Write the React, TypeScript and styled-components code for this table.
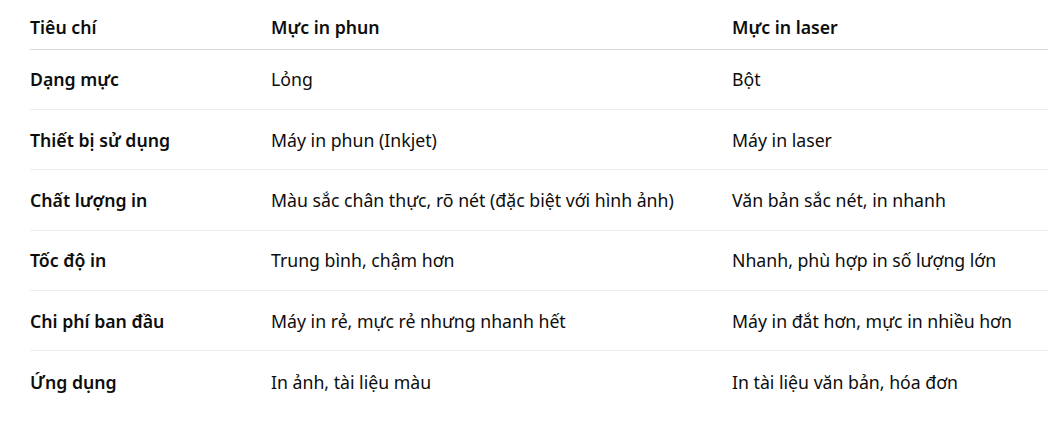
import React from 'react';
import styled, { createGlobalStyle } from 'styled-components';

const rows: [string, string, string][] = [
  ['Dạng mực', 'Lỏng', 'Bột'],
  ['Thiết bị sử dụng', 'Máy in phun (Inkjet)', 'Máy in laser'],
  ['Chất lượng in', 'Màu sắc chân thực, rõ nét (đặc biệt với hình ảnh)', 'Văn bản sắc nét, in nhanh'],
  ['Tốc độ in', 'Trung bình, chậm hơn', 'Nhanh, phù hợp in số lượng lớn'],
  ['Chi phí ban đầu', 'Máy in rẻ, mực rẻ nhưng nhanh hết', 'Máy in đắt hơn, mực in nhiều hơn'],
  ['Ứng dụng', 'In ảnh, tài liệu màu', 'In tài liệu văn bản, hóa đơn'],
];

const GlobalStyle = createGlobalStyle`
  html, body {
    margin: 0;
    padding: 0;
    background: #ffffff;
    overflow: hidden;
  }
  body {
    font-family: 'Noto Sans', 'Open Sans', sans-serif;
    color: #0d0d0d;
  }
`;

const Wrapper = styled.div`
  padding: 6px 0 0 30px;
`;

const Table = styled.div`
  display: grid;
  grid-template-columns: 241px 461px 1fr;
`;

const HeaderCell = styled.div`
  height: 42.5px;
  display: flex;
  align-items: center;
  font-size: 17.7px;
  font-weight: 600;
  white-space: nowrap;
  border-bottom: 1px solid #d9d9d9;
`;

const Cell = styled.div<{ $last?: boolean; $bold?: boolean }>`
  height: ${(p) => (p.$last ? '60.4px' : '59.4px')};
  display: flex;
  align-items: center;
  font-size: 17.7px;
  font-weight: ${(p) => (p.$bold ? 600 : 400)};
  white-space: nowrap;
  border-bottom: ${(p) => (p.$last ? 'none' : '1px solid #ececec')};
`;

export default function App() {
  return (
    <Wrapper>
      <GlobalStyle />
      <Table>
        <HeaderCell>Tiêu chí</HeaderCell>
        <HeaderCell>Mực in phun</HeaderCell>
        <HeaderCell>Mực in laser</HeaderCell>
        {rows.map((r, i) => {
          const last = i === rows.length - 1;
          return (
            <React.Fragment key={r[0]}>
              <Cell $bold $last={last}>{r[0]}</Cell>
              <Cell $last={last}>{r[1]}</Cell>
              <Cell $last={last}>{r[2]}</Cell>
            </React.Fragment>
          );
        })}
      </Table>
    </Wrapper>
  );
}
